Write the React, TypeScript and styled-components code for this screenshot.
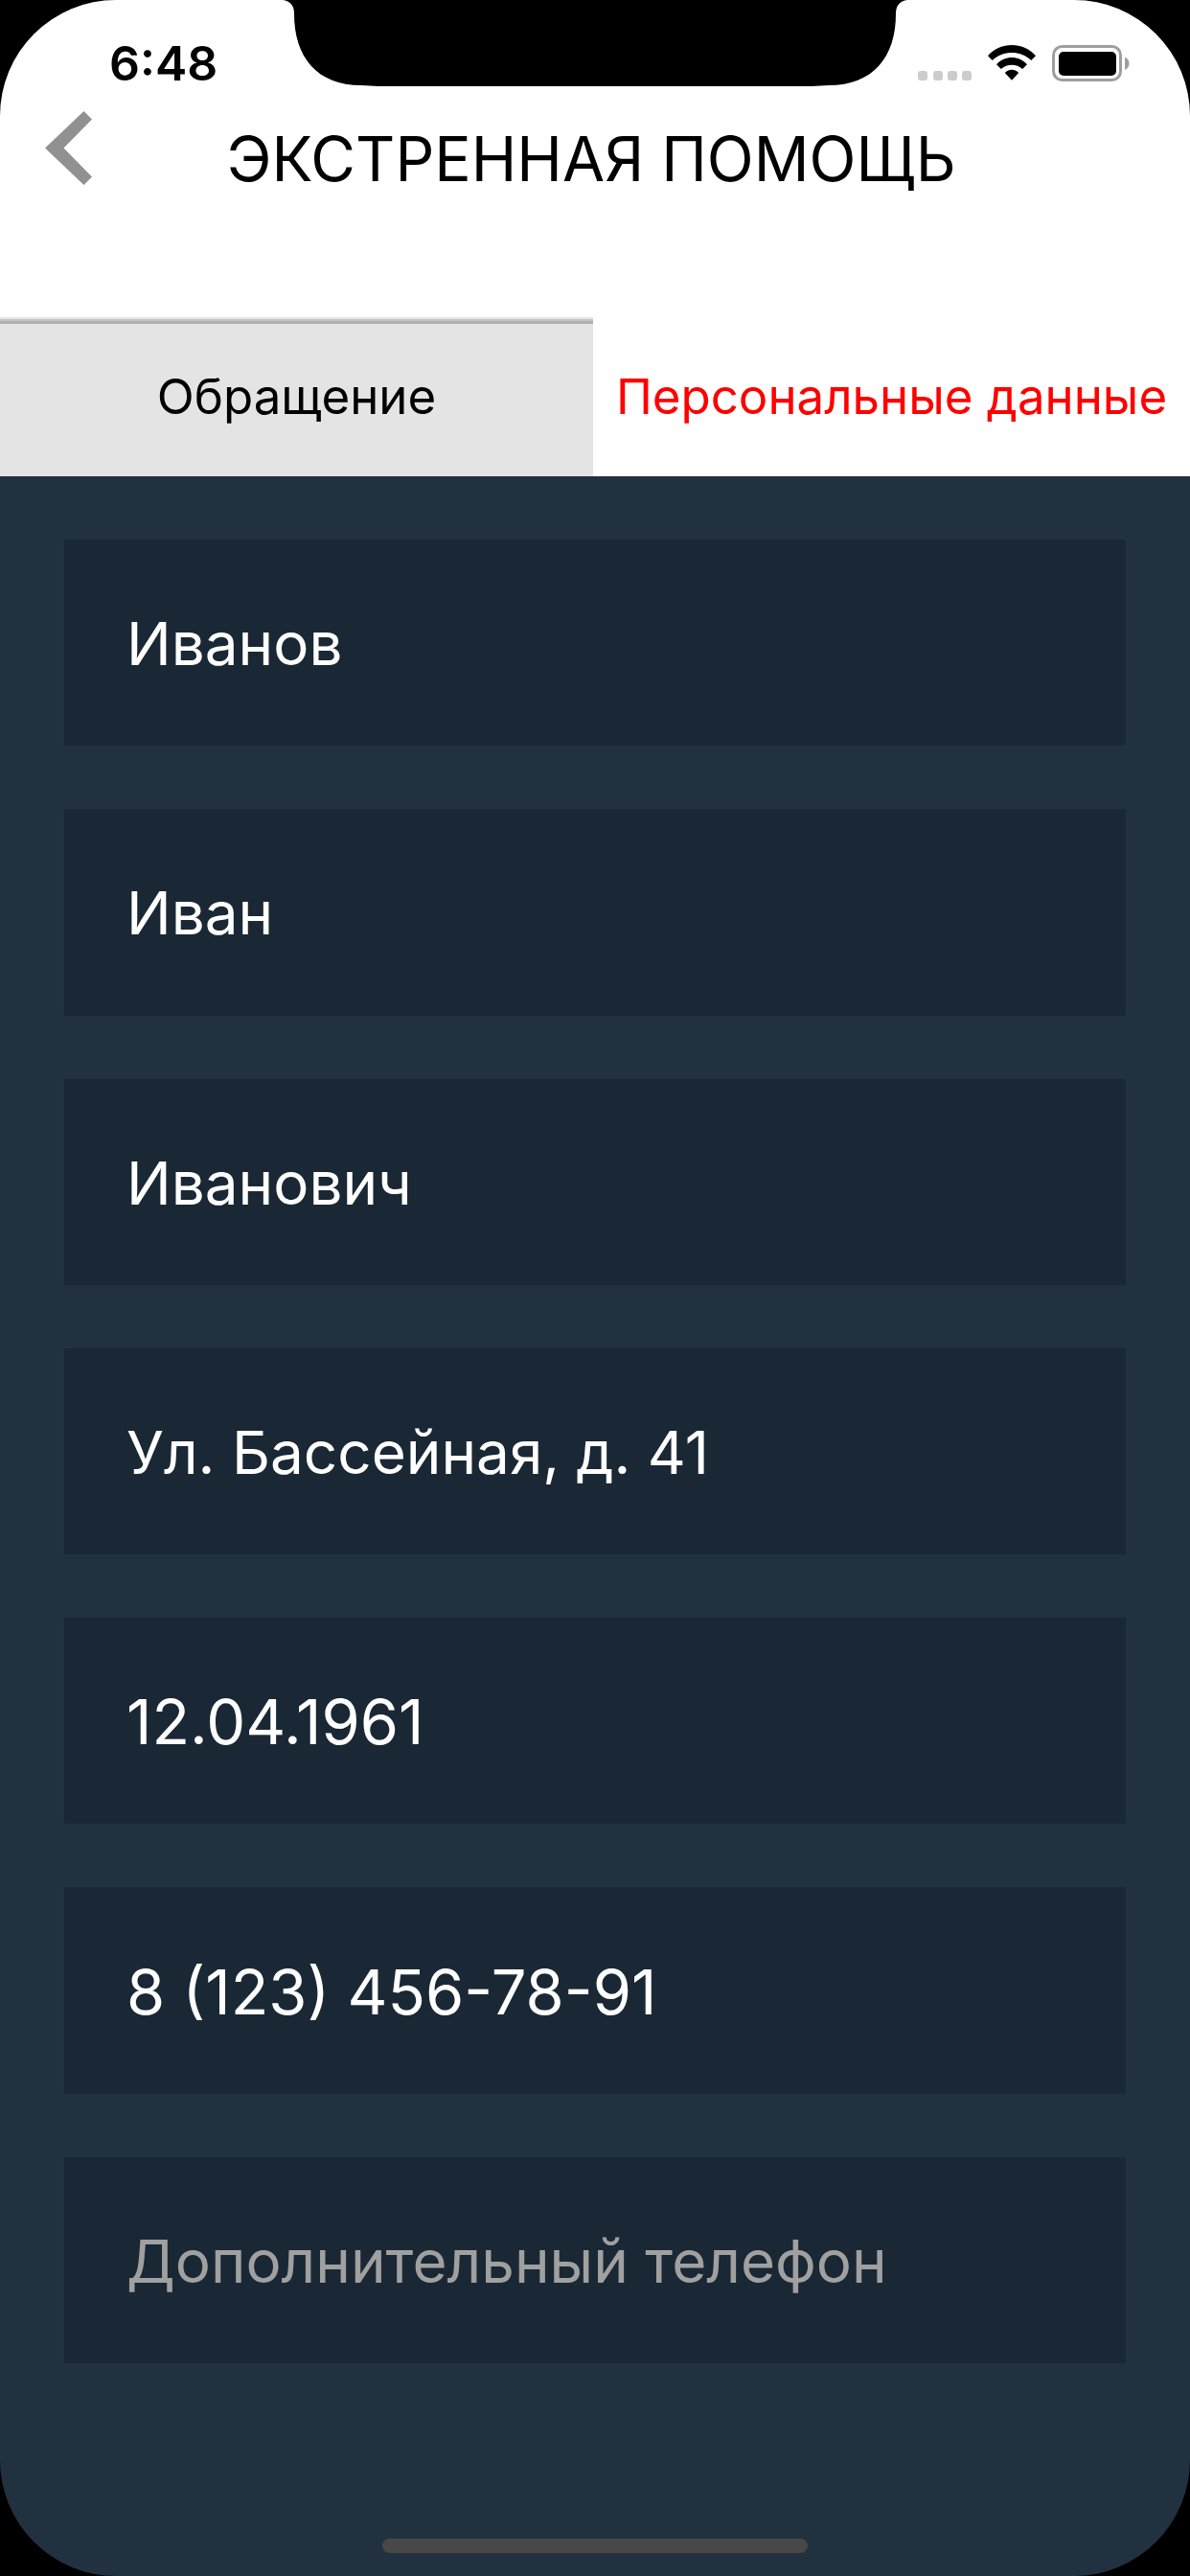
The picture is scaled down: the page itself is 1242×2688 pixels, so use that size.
import React, { useState } from "react";
import styled, { createGlobalStyle } from "styled-components";

const GlobalStyle = createGlobalStyle`
  *, *::before, *::after { box-sizing: border-box; }
  body { margin: 0; background: #000; }
`;

const Screen = styled.div`
  position: relative;
  display: flex;
  flex-direction: column;
  min-height: 100vh;
  overflow: hidden;
  border-radius: 121px;
  background: #223140;
  color: #000;
  font-family: Inter, "Liberation Sans", sans-serif;
`;

const TopArea = styled.div`
  background: #fff;
`;

const Notch = styled.svg`
  position: absolute;
  top: 0;
  left: 50%;
  transform: translateX(-50%);
`;

const StatusBar = styled.div`
  display: flex;
  align-items: center;
  justify-content: space-between;
  height: 110px;
  padding: 22px 62px 0 114px;
`;

const Clock = styled.time`
  font-size: 50px;
  font-weight: 600;
  line-height: 60px;
`;

const StatusIcons = styled.div`
  display: flex;
  align-items: center;
  gap: 17px;
`;

const Header = styled.header`
  display: grid;
  grid-template-columns: 96px 1fr 104px;
  align-items: start;
  height: 221px;
  padding-top: 6px;
`;

const BackButton = styled.button`
  display: flex;
  justify-content: flex-end;
  padding: 0;
  border: 0;
  background: none;
  cursor: pointer;
`;

const Title = styled.h1`
  margin: 0;
  font-size: 64px;
  font-weight: 400;
  line-height: 100px;
  text-align: center;
  white-space: nowrap;
`;

const Tabs = styled.div`
  display: grid;
  grid-template-columns: 619fr 623fr;
`;

const Tab = styled.button<{ $active: boolean }>`
  height: 166px;
  padding: 0;
  border: 0;
  background: ${(p) =>
    p.$active
      ? "#fff"
      : "linear-gradient(#e4e4e4 2px, #c4c4c4 2px, #c4c4c4 4px, #b0b0b0 4px, #b0b0b0 7px, #e4e4e4 7px)"};
  color: ${(p) => (p.$active ? "#f00" : "#000")};
  font: inherit;
  font-size: 51px;
  line-height: 60px;
  white-space: nowrap;
  cursor: pointer;
`;

const Form = styled.form`
  display: flex;
  flex: 1;
  flex-direction: column;
  gap: 66px;
  padding: 66px 67px 183px;
`;

const Field = styled.input<{ $numeric?: boolean }>`
  flex: 1 0 120px;
  width: 100%;
  padding: 2px 65px 0;
  border: 0;
  border-radius: 0;
  outline: 0;
  background: #192834;
  color: #fff;
  font: inherit;
  font-size: ${(p) => (p.$numeric ? "65px" : "62px")};

  &::placeholder {
    color: #a0a0a0;
    opacity: 1;
  }
`;

const HomeIndicator = styled.div`
  align-self: center;
  width: 444px;
  height: 15px;
  margin-bottom: 24px;
  border-radius: 8px;
  background: #484848;
`;

const fields = [
  { name: "surname", label: "Фамилия", value: "Иванов" },
  { name: "name", label: "Имя", value: "Иван" },
  { name: "patronymic", label: "Отчество", value: "Иванович" },
  { name: "address", label: "Адрес", value: "Ул. Бассейная, д. 41" },
  { name: "birthday", label: "Дата рождения", value: "12.04.1961", numeric: true },
  { name: "phone", label: "Телефон", value: "8 (123) 456-78-91", numeric: true },
  { name: "extraPhone", label: "Дополнительный телефон", value: "" },
];

const tabs = ["Обращение", "Персональные данные"];

function SignalIcon() {
  return (
    <svg width="56" height="38" viewBox="0 0 56 38" fill="#ccc" aria-hidden="true">
      {[0, 16, 31, 46].map((x) => (
        <rect key={x} x={x} y="27" width="10" height="10" rx="3" />
      ))}
    </svg>
  );
}

function WifiIcon() {
  return (
    <svg width="50" height="38" viewBox="0 0 50 38" aria-hidden="true">
      <path d="M0 11.2C13.500-3.700 36.500-3.700 50 11.200L45.200 16C34 5.400 16 5.400 4.800 16Z" />
      <path d="M9 20.200C18 10.700 32 10.700 41 20.200L36.200 25C30 19.200 20 19.200 13.800 25Z" />
      <path d="M17.800 29C22 24.800 28 24.800 32.200 29L25 36.800Z" />
    </svg>
  );
}

function BatteryIcon() {
  return (
    <svg width="82" height="38" viewBox="0 0 82 38" aria-hidden="true">
      <rect x="1.500" y="1.500" width="70" height="35" rx="9" fill="none" stroke="#9e9e9e" strokeWidth="3" />
      <rect x="7" y="7" width="60" height="25" rx="5" />
      <path d="M76 12.500C82 15 82 23.500 76 26Z" fill="#9e9e9e" />
    </svg>
  );
}

export default function App() {
  const [active, setActive] = useState(1);

  return (
    <>
      <GlobalStyle />
      <Screen>
        <TopArea>
          <Notch width="652" height="90" viewBox="0 0 652 90" aria-hidden="true">
            <path d="M0 0C8 1 12 6 12 14C12 60 36 89 82 89L100 90H552L570 89C616 89 640 60 640 14C640 6 644 1 652 0Z" />
          </Notch>
          <StatusBar>
            <Clock>6:48</Clock>
            <StatusIcons>
              <SignalIcon />
              <WifiIcon />
              <BatteryIcon />
            </StatusIcons>
          </StatusBar>
          <Header>
            <BackButton type="button" aria-label="Назад">
              <svg width="49" height="77" viewBox="0 0 49 77" fill="#919191" aria-hidden="true">
                <path d="M0 38.500L40.500 0L49 8.500L19.500 38.500L49 68.500L40.500 77Z" />
              </svg>
            </BackButton>
            <Title>ЭКСТРЕННАЯ ПОМОЩЬ</Title>
          </Header>
          <Tabs role="tablist">
            {tabs.map((label, i) => (
              <Tab
                key={label}
                type="button"
                role="tab"
                aria-selected={i === active}
                $active={i === active}
                onClick={() => setActive(i)}
              >
                {label}
              </Tab>
            ))}
          </Tabs>
        </TopArea>
        <Form>
          {fields.map((f) => (
            <Field
              key={f.name}
              name={f.name}
              aria-label={f.label}
              placeholder={f.label}
              defaultValue={f.value}
              $numeric={f.numeric}
            />
          ))}
        </Form>
        <HomeIndicator />
      </Screen>
    </>
  );
}
